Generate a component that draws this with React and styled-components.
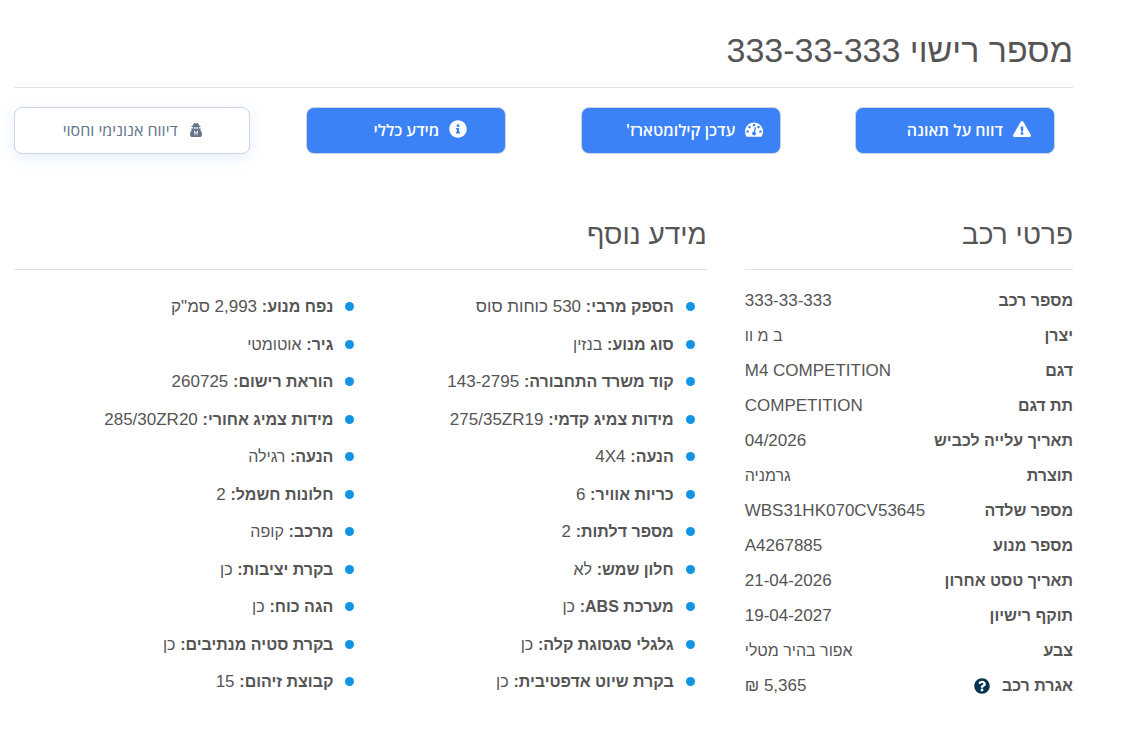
import React from "react";
import styled, { createGlobalStyle } from "styled-components";
import {
    FaExclamationTriangle,
    FaInfoCircle,
    FaQuestionCircle,
} from "react-icons/fa";

const GlobalStyle = createGlobalStyle`
    * {
        box-sizing: border-box;
    }
    body {
        margin: 0;
        background: #fff;
        color: #555;
        font-family: "Liberation Sans", Arial, sans-serif;
        font-size: 17px;
    }
`;

const Page = styled.main`
    direction: rtl;
    overflow: hidden;
    padding: 28px 58px 30px 14px;
`;

const Title = styled.h1`
    margin: 0;
    padding-bottom: 15px;
    border-bottom: 1px solid #e2e2e2;
    font-size: 34px;
    font-weight: 400;
    line-height: 44px;
`;

const Actions = styled.div`
    display: grid;
    grid-template-columns: repeat(4, 1fr);
    justify-items: center;
    margin: 19px -19px 0;
`;

const ActionButton = styled.button`
    display: flex;
    align-items: center;
    justify-content: center;
    gap: 10px;
    width: 200px;
    height: 47px;
    padding: 0 0 2px 28px;
    border: 1px solid #cbd5e1;
    border-radius: 8px;
    background: #3b82f6;
    color: #fff;
    font-family: "Open Sans", "Liberation Sans", sans-serif;
    font-size: 16px;
    font-weight: 600;
    cursor: pointer;
    &:hover {
        background: #2563eb;
    }
    svg {
        width: 18px;
        height: 18px;
        margin-bottom: 2px;
        fill: currentColor;
    }
`;

const GhostButton = styled(ActionButton)`
    gap: 12px;
    width: 236px;
    padding: 0 0 2px;
    background: #fff;
    color: #64748b;
    font-weight: 400;
    box-shadow: 0 4px 15px rgba(59, 130, 246, 0.12);
    &:hover {
        background: #f8fafc;
    }
    svg {
        width: 12px;
        height: 14px;
        margin-bottom: 0;
    }
`;

const Columns = styled.div`
    display: grid;
    grid-template-columns: 31% 1fr;
    column-gap: 38px;
    margin-top: 62px;
`;

const SectionTitle = styled.h2`
    margin: 0;
    padding-bottom: 15px;
    border-bottom: 1px solid #e2e2e2;
    font-size: 28px;
    font-weight: 400;
    line-height: 38px;
`;

const Details = styled.table`
    width: 100%;
    margin-top: 13px;
    border-collapse: collapse;
`;

const Label = styled.th`
    height: 35px;
    padding: 0;
    font-size: 16px;
    font-weight: 700;
    text-align: right;
    white-space: nowrap;
`;

const Value = styled.td`
    padding: 0;
    text-align: left;
    white-space: nowrap;
`;

const HelpButton = styled.button`
    display: inline-flex;
    margin-right: 12px;
    padding: 0;
    border: 0;
    background: none;
    color: #04344f;
    font-size: 16px;
    vertical-align: middle;
    cursor: pointer;
`;

const Specs = styled.ul`
    display: grid;
    grid-template-columns: 1fr 1fr;
    row-gap: 12px;
    margin: 24px 0 0;
    padding: 0 12px 0 0;
    list-style: none;
    line-height: 1.5;
`;

const Spec = styled.li`
    display: flex;
    align-items: center;
    gap: 12px;
    &::before {
        content: "";
        width: 9px;
        height: 9px;
        border-radius: 50%;
        background: #1294e5;
    }
`;

const SpecName = styled.b`
    font-size: 16px;
`;

const Text = styled.bdi`
    font-size: ${(props) => (props.$hebrew ? "16px" : "17px")};
`;

const ValueText = ({ children }) => (
    <Text $hebrew={!/[0-9A-Z]/.test(children)}>{children}</Text>
);

const GaugeIcon = () => (
    <svg viewBox="0 0 1792 1792" aria-hidden="true">
        <path d="M384 1152q0-53-37.5-90.5t-90.5-37.5-90.5 37.5-37.5 90.5 37.5 90.5 90.5 37.5 90.5-37.5 37.5-90.5zm192-448q0-53-37.5-90.5t-90.5-37.5-90.5 37.5-37.5 90.5 37.5 90.5 90.5 37.5 90.5-37.5 37.5-90.5zm428 481l101-382q6-26-7.5-48.5t-38.5-29.5-48 6.5-30 39.5l-101 382q-60 5-107 43.5t-63 98.5q-20 77 20 146t117 89 146-20 89-117q16-60-6-117t-72-91zm660-33q0-53-37.5-90.5t-90.5-37.5-90.5 37.5-37.5 90.5 37.5 90.5 90.5 37.5 90.5-37.5 37.5-90.5zm-640-640q0-53-37.5-90.5t-90.5-37.5-90.5 37.5-37.5 90.5 37.5 90.5 90.5 37.5 90.5-37.5 37.5-90.5zm448 192q0-53-37.5-90.5t-90.5-37.5-90.5 37.5-37.5 90.5 37.5 90.5 90.5 37.5 90.5-37.5 37.5-90.5zm320 448q0 261-141 483-19 29-54 29h-1402q-35 0-54-29-141-221-141-483 0-182 71-348t191-286 286-191 348-71 348 71 286 191 191 286 71 348z" />
    </svg>
);

const SpyIcon = () => (
    <svg viewBox="0 0 1408 1664" aria-hidden="true">
        <path d="M576 1536l96-448-96-128-128-64zM832 1536l128-640-128 64-96 128zM992 526q-2-4-4-6-10-8-96-8-70 0-167 19-7 2-21 2t-21-2q-97-19-167-19-86 0-96 8-2 2-4 6 2 18 4 27 2 3 7.5 6.5t7.5 10.5q2 4 7.5 20.5t7 20.5 7.5 17 8.5 17 9 14 12 13.5 14 9.5 17.5 8 20.5 4 24.5 2q36 0 59-12.5t32.5-30 14.5-34.5 11.5-29.5 17.5-12.5h12q11 0 17.5 12.5t11.5 29.5 14.5 34.5 32.5 30 59 12.5q13 0 24.5-2t20.5-4 17.5-8 14-9.5 12-13.5 9-14 8.5-17 7.5-17 7-20.5 7.5-20.5q2-7 7.5-10.5t7.5-6.5q2-9 4-27zM1408 1405q0 121-73 190t-194 69h-874q-121 0-194-69t-73-190q0-61 4.5-118t19-125.5 37.5-123.5 63.5-103.5 93.5-74.5l-90-220h214q-22-64-22-128 0-12 2-32-194-40-194-96 0-57 210-99 17-62 51.5-134t70.5-114q32-37 76-37 30 0 84 31t84 31 84-31 84-31q44 0 76 37 36 42 70.5 114t51.5 134q210 42 210 99 0 56-194 96 7 81-20 160h214l-82 225q63 33 107.5 96.5t65.5 143.5 29 151.5 8 148.5z" />
    </svg>
);

const details = [
    { label: "מספר רכב", value: "333-33-333" },
    { label: "יצרן", value: "ב מ וו" },
    { label: "דגם", value: "M4 COMPETITION" },
    { label: "תת דגם", value: "COMPETITION" },
    { label: "תאריך עלייה לכביש", value: "04/2026" },
    { label: "תוצרת", value: "גרמניה" },
    { label: "מספר שלדה", value: "WBS31HK070CV53645" },
    { label: "מספר מנוע", value: "A4267885" },
    { label: "תאריך טסט אחרון", value: "21-04-2026" },
    { label: "תוקף רישיון", value: "19-04-2027" },
    { label: "צבע", value: "אפור בהיר מטלי" },
    { label: "אגרת רכב", value: "5,365 ₪", rtl: true, help: true },
];

const specs = [
    ["הספק מרבי", "530 כוחות סוס"],
    ["נפח מנוע", '2,993 סמ"ק'],
    ["סוג מנוע", "בנזין"],
    ["גיר", "אוטומטי"],
    ["קוד משרד התחבורה", "143-2795"],
    ["הוראת רישום", "260725"],
    ["מידות צמיג קדמי", "275/35ZR19"],
    ["מידות צמיג אחורי", "285/30ZR20"],
    ["הנעה", "4X4"],
    ["הנעה", "רגילה"],
    ["כריות אוויר", "6"],
    ["חלונות חשמל", "2"],
    ["מספר דלתות", "2"],
    ["מרכב", "קופה"],
    ["חלון שמש", "לא"],
    ["בקרת יציבות", "כן"],
    ["מערכת ABS", "כן"],
    ["הגה כוח", "כן"],
    ["גלגלי סגסוגת קלה", "כן"],
    ["בקרת סטיה מנתיבים", "כן"],
    ["בקרת שיוט אדפטיבית", "כן"],
    ["קבוצת זיהום", "15"],
];

const App = () => {
    return (
        <Page lang="he">
            <GlobalStyle />
            <Title>
                מספר רישוי <bdi>333-33-333</bdi>
            </Title>
            <Actions>
                <ActionButton type="button">
                    <FaExclamationTriangle />
                    דווח על תאונה
                </ActionButton>
                <ActionButton type="button">
                    <GaugeIcon />
                    עדכן קילומטארז'
                </ActionButton>
                <ActionButton type="button">
                    <FaInfoCircle />
                    מידע כללי
                </ActionButton>
                <GhostButton type="button">
                    <SpyIcon />
                    דיווח אנונימי וחסוי
                </GhostButton>
            </Actions>
            <Columns>
                <section>
                    <SectionTitle>פרטי רכב</SectionTitle>
                    <Details>
                        <tbody>
                            {details.map(({ label, value, rtl, help }) => (
                                <tr key={label}>
                                    <Label scope="row">
                                        {label}
                                        {help && (
                                            <HelpButton type="button" aria-label="אגרת רכב">
                                                <FaQuestionCircle />
                                            </HelpButton>
                                        )}
                                    </Label>
                                    <Value>
                                        {rtl ? value : <ValueText>{value}</ValueText>}
                                    </Value>
                                </tr>
                            ))}
                        </tbody>
                    </Details>
                </section>
                <section>
                    <SectionTitle>מידע נוסף</SectionTitle>
                    <Specs>
                        {specs.map(([name, value]) => (
                            <Spec key={name + value}>
                                <span>
                                    <SpecName>{name}:</SpecName> <ValueText>{value}</ValueText>
                                </span>
                            </Spec>
                        ))}
                    </Specs>
                </section>
            </Columns>
        </Page>
    );
};

export default App;
